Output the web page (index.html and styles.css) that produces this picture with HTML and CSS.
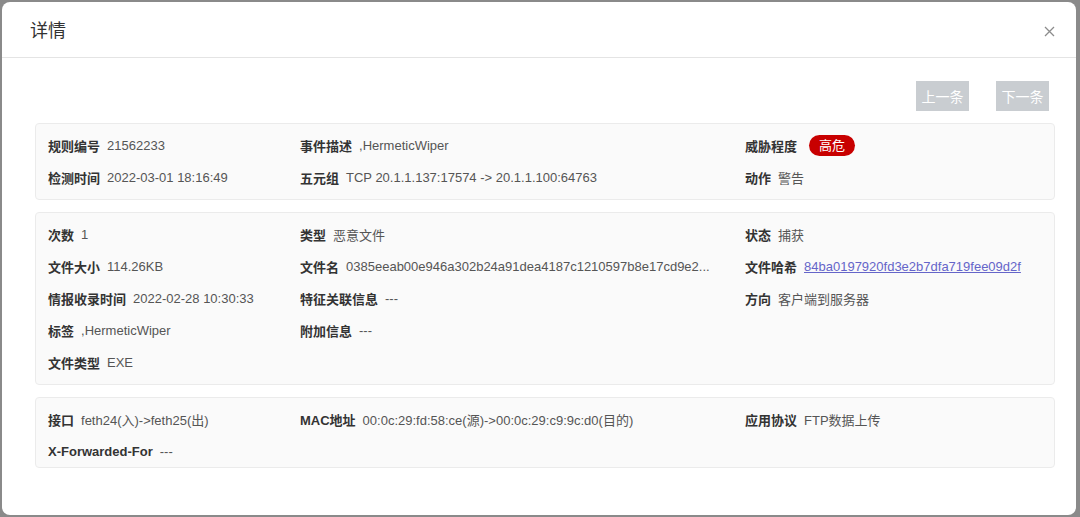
FILE: index.html
```html
<!DOCTYPE html>
<html lang="zh-CN">
<head>
<meta charset="utf-8">
<title>详情</title>
<link rel="stylesheet" href="styles.css">
</head>
<body>
<div class="modal">
  <div class="modal-header">
    <div class="modal-title">详情</div>
    <button class="close" aria-label="关闭">
      <svg width="11" height="11" viewBox="0 0 11 11"><path d="M1 1L10 10M10 1L1 10" stroke="#8c8c8c" stroke-width="1.3" fill="none"/></svg>
    </button>
  </div>
  <div class="modal-body">
    <div class="toolbar">
      <button class="nav-btn">上一条</button>
      <button class="nav-btn">下一条</button>
    </div>

    <div class="card">
      <div class="cell"><span class="label">规则编号</span><span class="value">21562233</span></div>
      <div class="cell"><span class="label">事件描述</span><span class="value">,HermeticWiper</span></div>
      <div class="cell"><span class="label">威胁程度</span><span class="badge">高危</span></div>
      <div class="cell"><span class="label">检测时间</span><span class="value">2022-03-01 18:16:49</span></div>
      <div class="cell"><span class="label">五元组</span><span class="value">TCP 20.1.1.137:17574 -&gt; 20.1.1.100:64763</span></div>
      <div class="cell"><span class="label">动作</span><span class="value">警告</span></div>
    </div>

    <div class="card">
      <div class="cell"><span class="label">次数</span><span class="value">1</span></div>
      <div class="cell"><span class="label">类型</span><span class="value">恶意文件</span></div>
      <div class="cell"><span class="label">状态</span><span class="value">捕获</span></div>
      <div class="cell"><span class="label">文件大小</span><span class="value">114.26KB</span></div>
      <div class="cell"><span class="label">文件名</span><span class="value">0385eeab00e946a302b24a91dea4187c1210597b8e17cd9e2...</span></div>
      <div class="cell"><span class="label">文件哈希</span><a class="value link" href="#">84ba0197920fd3e2b7dfa719fee09d2f</a></div>
      <div class="cell"><span class="label">情报收录时间</span><span class="value">2022-02-28 10:30:33</span></div>
      <div class="cell"><span class="label">特征关联信息</span><span class="value">---</span></div>
      <div class="cell"><span class="label">方向</span><span class="value">客户端到服务器</span></div>
      <div class="cell"><span class="label">标签</span><span class="value">,HermeticWiper</span></div>
      <div class="cell"><span class="label">附加信息</span><span class="value">---</span></div>
      <div class="cell"></div>
      <div class="cell"><span class="label">文件类型</span><span class="value">EXE</span></div>
    </div>

    <div class="card card-last">
      <div class="cell"><span class="label">接口</span><span class="value">feth24(入)-&gt;feth25(出)</span></div>
      <div class="cell"><span class="label">MAC地址</span><span class="value">00:0c:29:fd:58:ce(源)-&gt;00:0c:29:c9:9c:d0(目的)</span></div>
      <div class="cell"><span class="label">应用协议</span><span class="value">FTP数据上传</span></div>
      <div class="cell"><span class="label">X-Forwarded-For</span><span class="value">---</span></div>
    </div>
  </div>
</div>
</body>
</html>
```

FILE: styles.css
```css
* { box-sizing: border-box; }
html, body { margin: 0; padding: 0; }
body {
  background: #8a8a8a;
  font-family: "Liberation Sans", Arial, "Noto Sans CJK SC", sans-serif;
  font-size: 13px;
  color: #333;
  width: 1080px;
  height: 517px;
  overflow: hidden;
  padding: 2px 4px 2px 2px;
}
.modal {
  background: #fff;
  height: 513px;
  border-radius: 8px;
  overflow: hidden;
}
.modal-header {
  height: 56px;
  border-bottom: 1px solid #e4e4e4;
  display: flex;
  align-items: center;
  justify-content: space-between;
  padding: 0 21px 0 28px;
}
.modal-title {
  font-size: 18px;
  color: #333;
  font-family: "Noto Sans CJK SC", sans-serif;
  padding-bottom: 2px;
}
.close {
  border: 0;
  background: none;
  padding: 0;
  width: 12px;
  height: 12px;
  display: flex;
  align-items: center;
  justify-content: center;
  margin-top: 4px;
}
.modal-body {
  padding: 0 21px 0 33px;
}
.toolbar {
  display: flex;
  justify-content: flex-end;
  gap: 27px;
  padding: 23px 6px 0 0;
  margin-bottom: 12px;
}
.nav-btn {
  width: 53px;
  height: 30px;
  border: 0;
  background: #c9cdd1;
  color: #fff;
  font-family: "Noto Sans CJK SC", sans-serif;
  font-size: 14px;
  padding: 0;
}
.card {
  background: #fafafa;
  border: 1px solid #ebebeb;
  border-radius: 4px;
  padding: 5px 12px 6px;
  display: grid;
  grid-template-columns: 252px 445px 1fr;
  margin-bottom: 12px;
}
.card-last { padding-bottom: 0; }
.cell {
  height: 32px;
  display: flex;
  align-items: center;
  gap: 7px;
  white-space: nowrap;
  min-width: 0;
}
.label {
  font-weight: 700;
  color: #333;
  flex: none;
}
.value {
  color: #555;
  min-width: 0;
}
.link {
  color: #6565c9;
  text-decoration: underline;
}
.badge {
  margin-left: 5px;
  height: 21px;
  line-height: 21px;
  padding: 0 10px;
  border-radius: 11px;
  background: #c80000;
  color: #fff;
  font-size: 13px;
}
```
